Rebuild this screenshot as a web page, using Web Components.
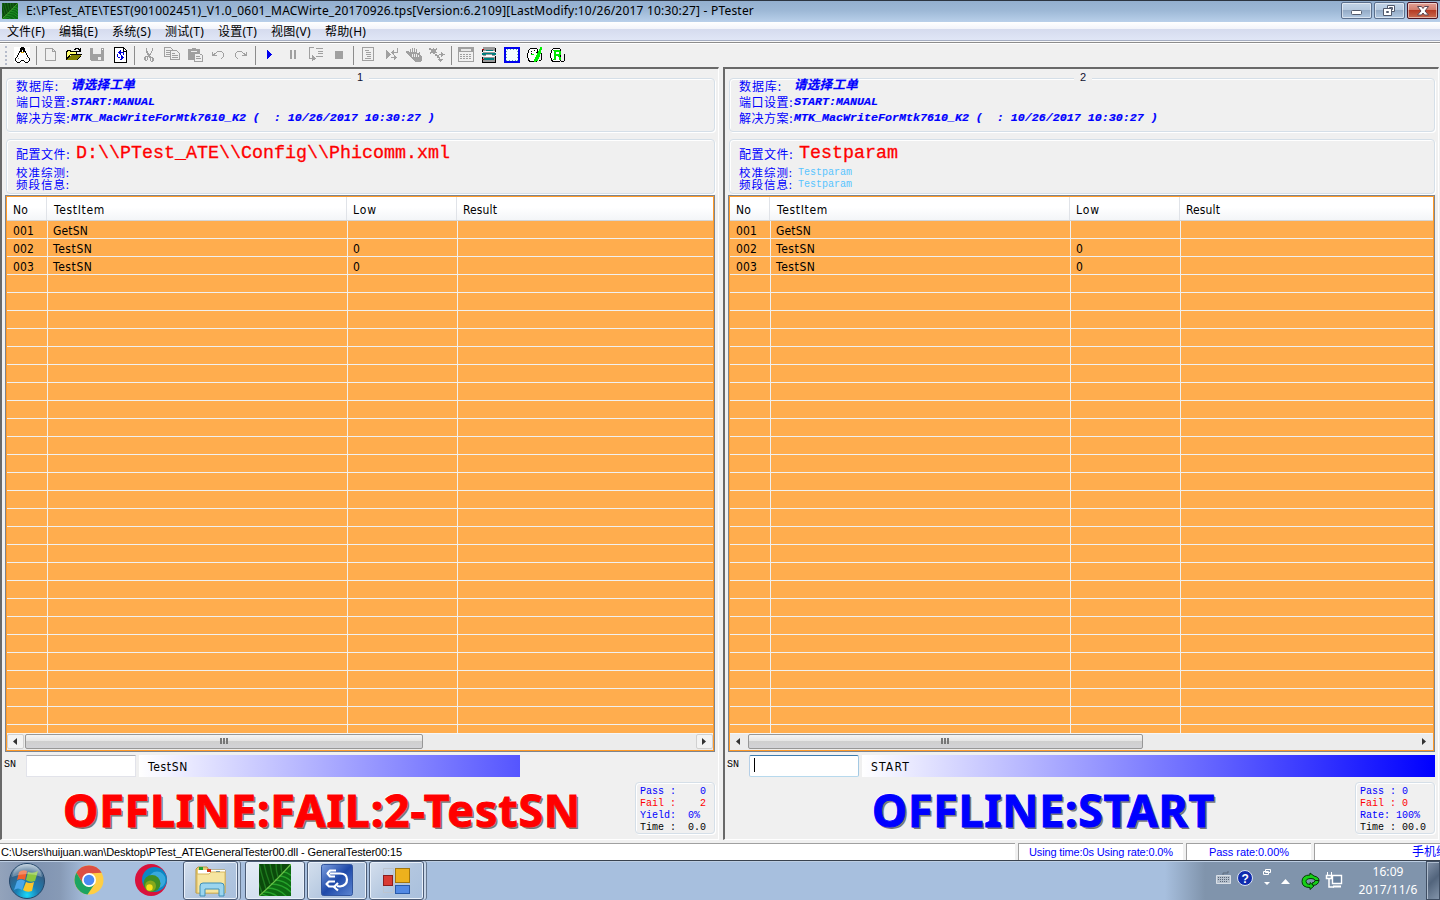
<!DOCTYPE html>
<html lang="zh-CN">
<head>
<meta charset="utf-8">
<title>PTester</title>
<style>
html,body{margin:0;padding:0;width:1440px;height:900px;overflow:hidden;background:#f0f0f0}
</style>
</head>
<body>
<pt-app></pt-app>
<script>
const define = (name, css, html, setup) => {
  customElements.define(name, class extends HTMLElement {
    connectedCallback() {
      if (this.shadowRoot) return;
      const root = this.attachShadow({mode: 'open'});
      root.innerHTML = `<style>*{box-sizing:border-box}${css}</style>${typeof html === 'function' ? html(this) : html}`;
      if (setup) setup(this, root);
    }
  });
};

/* Text that spreads its letter spacing to reach a given width. */
define('fit-text', ':host{display:inline-block;white-space:pre}span{display:inline-block;white-space:pre}',
  '<span><slot></slot></span>',
  (el, root) => {
    const s = root.querySelector('span'), w = +el.getAttribute('w');
    const nat = s.getBoundingClientRect().width;
    s.style.letterSpacing = ((w - nat) / el.textContent.length) + 'px';
  });

const G = '#a0a0a0';
const ICONS = {
  penguin: `<path d="M0 0h16v16H0z" fill="#fff"/><path d="M7 0h3v1h1v4H9V3H8v2H6V1h1zM5 4h1v2H5zM11 4h1v2h-1zM4 6h1v2H4zM12 6h1v2h-1zM3 8h1v2H3zM13 8h1v2h-1zM2 10h1v1H2zM14 10h1v1h-1zM1 11h1v3H1zM15 11h1v3h-1zM2 14h1v1H2zM14 14h1v1h-1zM3 15h3v1H3zM11 15h3v1h-3zM6 14h1v1H6zM10 14h1v1h-1zM7 13h3v1H7z" fill="#000"/><path d="M7 5h3v1H7z" fill="#e0a800"/><path d="M4 11h1v1H4zM12 11h1v1h-1z" fill="#888"/>`,
  file: `<path d="M2.500 1.500h7l3 3v9h-10zM9.500 1.500v3h3" fill="none" stroke="${G}"/>`,
  open: `<path d="M1 4h4v1h6v3H4l-3 5z" fill="#ffff70"/><path d="M.5 12.500v-8h1v-1h3v1h6v3M4.500 7.500h11l-4 5H.500z" stroke="#000" fill="none"/><path d="M5 8h10l-3.500 4.500H1.500z" fill="#808000"/><path d="M8 2.500h1v-1h3v1h1v1h1M14.500 1v4M11 4.500h4" stroke="#000" fill="none"/>`,
  save: `<path d="M1 1h14v13H2l-1-1z" fill="${G}"/><path d="M4 1h8v6H4zM9 10h3v3H9z" fill="#eee"/><path d="M13 2h1v1h-1z" fill="#fff"/>`,
  reload: `<path d="M2.500.500h9l3 3v12h-12z" fill="#fff" stroke="#000"/><path d="M11 0v4h4" fill="none" stroke="#000"/><path d="M8 3v1H7v1H6v1h1v1h1v1h1V6h1V5H9V3zM9 8v4h-1v1h2v-1h1v-1h1v-1h-1V9h-1V8zM10 5h2v3h-1V6h-1zM5 7h1v3h2v1H6v-1H5z" fill="#0000e0"/>`,
  cut: `<path d="M5 1h1v3h1v2h1v1h1V6h1V4h1V1h1v3h-1v2h-1v2H9v1h1v1h2v1h1v3h-1v1h-2v-1H9v-3H8v-1H7v3H6v1H4v-1H3v-3h1v-1h2V9h1V8H6V6H5zM5 10v3h1v-3zM10 11v3h1v-3z" fill="${G}" fill-rule="evenodd"/>`,
  copy: `<path d="M.5.500h6l2 2v7h-8z" fill="#f0f0f0" stroke="${G}"/><path d="M2 3.500h4M2 5.500h4M2 7.500h4" stroke="${G}"/><path d="M6.500 3.500h6l3 3v6h-9z" fill="#f0f0f0" stroke="${G}"/><path d="M8 6.500h3M8 8.500h6M8 10.500h6" stroke="${G}"/>`,
  paste: `<path d="M1 2h4V1h4v1h4v4H7v7H1z" fill="${G}"/><path d="M4 4.500h6" stroke="#eee"/><path d="M7.500 6.500h5l3 2v6h-8z" fill="#f0f0f0" stroke="${G}"/><path d="M9 9.500h4M9 11.500h5" stroke="${G}"/>`,
  undo: `<path d="M2 5h1v2h1V6h2V5h1V4h5v1h1v1h1v4h-1v1h-1v1h-1v-1h1v-1h1V6h-1V5H7v1H6v1H5v1h2v1H2z" fill="${G}"/>`,
  redo: `<path d="M14 5h-1v2h-1V6h-2V5H9V4H4v1H3v1H2v4h1v1h1v1h1v-1H4v-1H3V6h1V5h5v1h1v1h1v1H9v1h5z" fill="${G}"/>`,
  play: `<path d="M5 3h1v1h1v1h1v1h1v1h1v1H9v1H8v1H7v1H6v1H5z" fill="#0000f0"/>`,
  pause: `<path d="M5 3h2v9H5zM9 3h2v9H9z" fill="${G}"/>`,
  step: `<path d="M6 .500H1.500v11H5M8 1.500h7M10 4.500h5M10 6.500h5M8 9.500h7" fill="none" stroke="${G}"/><path d="M4 8l4 3.500-4 3z" fill="${G}"/>`,
  stop: `<path d="M4 4h8v8H4z" fill="${G}"/>`,
  list: `<path d="M2.500.500h11v13h-11zM5 3.500h4M6 5.500h5M6 7.500h5M7 9.500h4M5 11.500h6" fill="none" stroke="${G}"/>`,
  swap: `<path d="M3 3l5 4.500L3 12z" fill="${G}"/><path d="M10 3h1v2h3V1h1v5h-4v2h-1V7H9V6H8V5h1V4h1zM8 10h3V8h1v1h1v1h1v1h-1v1h-1v1h-1v-2H8z" fill="${G}"/>`,
  hand: `<path d="M0 4h2l2 2V2h1v3h1V1h1v4h1V1h1v4h1V2h1v4h1l1-1h1v3l2 2v3l-2 2H9l-3-3-2-3-3-2z" fill="${G}"/><path d="M6 7v3M8 7v3M10 7v3M12 8v2" stroke="#eee"/>`,
  merge: `<path d="M0 1h2v1h2V1h1v1h2V1h1v2H7v2h1v1H6v1H4V6H2v1H1V5h1V3H0z" fill="${G}"/><path d="M6 7h2v1h2v2h1v3h-1v-2H8V9H6z" fill="${G}"/><path d="M10 7h2V5h1v1h1v1h2v1h-2v1h-1v1h-1V8h-2zM9 12h5v1h-1v1h-1v1h-1v-1h-1v-1H9z" fill="${G}"/>`,
  calc: `<path d="M.5.500h15v14H.500z" fill="#f0f0f0" stroke="${G}"/><path d="M1 1h14v4H1z" fill="${G}"/><path d="M3 2h10v2H3z" fill="#e8e8e8"/><path d="M2 7.500h12M2 9.500h12M2 11.500h12" stroke="${G}" stroke-dasharray="2 1"/>`,
  server: `<path d="M2 0h12v4H2zM2 5h12v4H2zM2 10h12v5H2z" fill="#999"/><path d="M5 3h7v1H5zM1 6h4v2H1zM11 6h4v2h-4zM5 6h6v1H5zM3 11h10v2H3z" fill="#008080"/><path d="M4 4h9v1H4zM4 9h9v1H4zM5 8h6v1H5z" fill="#fff"/><path d="M1 2h1v3H1zM14 1h1v4h-1zM1 10h1v5H1zM14 9h1v6h-1zM1 15h14v1H1z" fill="#000"/><path d="M1 2h2v1H1zM1 12h2v1H1z" fill="#a00"/>`,
  frame: `<path d="M0 0h16v16H0z" fill="#0000f0"/><path d="M2 2h12v12H2z" fill="#f3ffff"/><path d="M2.500 2.500h11v11h-11z" fill="none" stroke="#60a8a8" stroke-dasharray="1 2"/>`,
  probe: `<path d="M3 1h7v1h1v12h-1v1H2v-1H1v-3H0V6h1V3h1V2h1z" fill="#000"/><path d="M3 2h7v12H3v-1H2v-2H1V6h1V3h1z" fill="#fff"/><path d="M4 4h1v1H4zM7 3h1v1H7zM9 5h1v1H9zM4 6h1v1H4z" fill="#000"/><path d="M13 0h2v3h-1v4h-1v3h-1v2h-1v2H9v1H7v-3h1v-2h1V8h1V6h1V4h1V2h1zM4 7h3v1H4z" fill="#00f000"/><path d="M14 6h1v7h-1v1h-2v-1h2z" fill="#000"/>`,
  rsign: `<path d="M3 1h7v1h1v12h-1v1H2v-1H1v-3H0V6h1V3h1V2h1z" fill="#000"/><path d="M3 2h7v12H3v-1H2v-2H1V6h1V3h1z" fill="#fff"/><path d="M3 3h7v1h1v4h-1v2h1v3H9v-3H8V9H6v4H3v-1h1V4H3zM6 5v2h3V5z" fill="#00e800" fill-rule="evenodd"/><path d="M14 7h1v7h-1v1h-3v-1h3z" fill="#000"/>`
};
define('pt-icon', ':host{display:block;width:16px;height:16px}svg{display:block}',
  el => `<svg width="16" height="16" viewBox="0 0 16 16" shape-rendering="crispEdges">${ICONS[el.getAttribute('name')]}</svg>`);

define('leaf-picture', ':host{display:block}svg{display:block;width:100%;height:100%}',
  `<svg viewBox="0 0 32 32" preserveAspectRatio="none"><path d="M0 0h32v32H0z" fill="#0b4a0b"/>
  <path d="M0 32Q14 18 32 0v32z" fill="#0d6a12"/>
  <g stroke="#1f7a1f" stroke-width="1.400" fill="none"><path d="M3 29Q0 20 -4 8M7 25Q3 12 0 0M11 20Q7 10 5 0M15 17Q12 8 11 0M19 13Q17 7 17 0M23 9q-1-4-1-9"/></g><g stroke="#27a32c" stroke-width="1.300" fill="none"><path d="M5 28q9 0 15 6M8 24q12 0 20 9M12 20q12 0 21 9M16 16q9 0 17 8M20 12q7 0 13 6M24 8q4 0 9 4M3 30l8 3"/></g>
  <path d="M0 32Q16 18 32 0" stroke="#6ac046" stroke-width="1.200" fill="none"/></svg>`);

define('title-bar', `:host{display:flex;height:22px;border-top:1px solid #2c3440;background:linear-gradient(#93afcf,#9db8d6 45%,#b9d0ea);align-items:center;font:12px "Noto Sans","Open Sans",sans-serif;color:#000}
leaf-picture{width:16px;height:16px;margin:0 8px 2px 2px}
.t{flex:1;line-height:20px;height:21px}
.b{display:flex;gap:2px;padding-right:2px;align-self:flex-start;margin-top:1px}
.b div{width:31px;height:17px;border:1px solid #5b6f8c;border-radius:2px;background:linear-gradient(#c2d4e8,#b4c8de 48%,#94abc6 50%,#b2c9e2);box-shadow:inset 0 0 0 1px #ffffff80}
.b .x{background:linear-gradient(#e2a196,#d17a6a 48%,#b53b24 50%,#c96b50);border-color:#4b1422}
svg{display:block;width:29px;height:15px}`,
`<leaf-picture></leaf-picture><div class="t"><fit-text w="728">E:\\PTest_ATE\\TEST(901002451)_V1.0_0601_MACWirte_20170926.tps[Version:6.2109][LastModify:10/26/2017 10:30:27] - PTester</fit-text></div>
<div class="b"><div><svg><rect x="9.500" y="7.500" width="10" height="4" rx="1" fill="#fff" stroke="#525a6c"/></svg></div>
<div><svg><path d="M12.500 2.500h7v6h-7z" fill="#fff" stroke="#525a6c"/><path d="M14.500 4.500h3v2h-3z" fill="#a9bdd5" stroke="#525a6c"/><path d="M8.500 5.500h8v7h-8z" fill="#fff" stroke="#525a6c"/><path d="M11.500 8.500h2v1h-2z" fill="#a9bdd5" stroke="#525a6c"/></svg></div>
<div class="x"><svg><path d="M9.500 3.500h4l1.500 2 1.500-2h4l-3.500 4.500 3.500 4h-4l-1.500-2-1.500 2h-4l3.500-4z" fill="#fff" stroke="#5a4450"/></svg></div></div>`);

define('menu-bar', `:host{display:flex;height:22px;padding:0 0 0 7px;background:linear-gradient(#fff 0,#f2f4fa 7px,#d5dbee 7px,#e0e6f6 18px,#a6aec2 18px,#a6aec2 19px,#fff 19px,#f0f0f0 20px,#8c8c8c 20px,#8c8c8c 21px,#fff 21px);font:12px/20px "Noto Sans","Noto Sans CJK SC",sans-serif;color:#000}
fit-text{margin-right:14px}`,
['文件(F)','编辑(E)','系统(S)','测试(T)','设置(T)','视图(V)','帮助(H)'].map((t,i)=>`<fit-text w="${[38,39,39,39,39,40,41][i]}">${t}</fit-text>`).join(''));

define('tool-bar', `:host{display:flex;height:23px;align-items:center;padding-left:5px;background:#f0f0f0}
.g{width:5px;height:19px;border-left:2px dotted #b6bccb}
.c{width:23px;padding-left:4px;margin-top:-2px}
.s{width:6px;height:19px;padding-left:3px;margin-top:-1px}.s i{display:block;width:1px;height:19px;background:#8c8c8c}`,
'<div class="g"></div>' + 'penguin|file open save reload|cut copy paste undo redo|play pause step stop|list swap hand merge|calc server frame probe rsign'
  .split('|').map(g => g.split(' ').map(n => `<div class="c"><pt-icon name="${n}"></pt-icon></div>`).join('')).join('<div class="s"><i></i></div>'));

define('group-box', ':host{display:block;position:relative;border:1px solid #d5dfe8;border-radius:4px;box-shadow:inset 1px 1px #fff,1px 1px #fff}.l{position:absolute;left:344px;top:-9px;width:18px;height:11px;overflow:hidden;background:#f0f0f0;text-align:center;font:11px/15px "Liberation Sans",sans-serif;color:#101030}.l:empty{display:none}',
  el => `<div class="l">${el.getAttribute('legend') || ''}</div><slot></slot>`);

define('test-grid', `:host{display:flex;flex-direction:column;height:557px;border:1px solid #7f858d;background:#ffad4e;padding:1px 0 1px 1px;box-shadow:inset 1px 1px #ff9a28,inset -1px -1px #ff9a28;font:12px "DejaVu Sans Condensed","DejaVu Sans",sans-serif;font-stretch:condensed;color:#000}
.r{display:grid;grid-template-columns:40px 300px 110px 1fr;height:18px;line-height:21px;flex:none;margin-right:1px;border-bottom:1px solid #f0f0f0}
.r>div{padding-left:5px;border-left:1px solid #f0f0f0;white-space:pre;height:17px}
.r>div:first-child{border:0;padding-left:6px}
.r.h{height:24px;line-height:27px;background:linear-gradient(#fff 45%,#f3f5f8);border-bottom:1px solid #d5d5d5}
.r.h>div{border-color:#e0e3e8;padding-left:6px;margin-left:-1px;height:23px}.r.h>div:first-child{margin-left:0}
.r.h>div:nth-child(2){padding-left:7px}
.rows{flex:1;overflow:hidden;min-height:0}
.sb{display:flex;height:17px;background:#ececec;margin-right:1px;border-top:1px solid #f6f6f6}
.a{width:17px;height:15px;display:flex;align-items:center;justify-content:center}
.th{height:15px;margin-left:1px;border:1px solid #979797;border-radius:2px;background:linear-gradient(#f4f4f4,#e4e4e4 48%,#cfcfcf 50%,#d2d2d6);display:flex;align-items:center;justify-content:center}
.sp{flex:1}.bd{border:1px solid #d0d0d0;border-radius:2px;background:#f3f3f3}`,
el => {
  const row = (a, c='') => `<div class="r ${c}">${a.map(x => `<div>${x ? `<fit-text w="${x[1]}">${x[0]}</fit-text>` : ''}</div>`).join('')}</div>`;
  const data = [[['001',21],['GetSN',35],0,0],[['002',21],['TestSN',39.500],['0',7],0],[['003',21],['TestSN',39.500],['0',7],0]];
  while (data.length < 29) data.push([0,0,0,0]);
  const bd = el.hasAttribute('hot') ? '' : 'bd';
  return row([['No',15],['TestItem',51],['Low',24],['Result',34]],'h') + `<div class="rows">${data.map(d => row(d)).join('')}</div>
  <div class="sb"><div class="a ${bd}"><svg width="5" height="7"><path d="M4 0v7L0 3.500z" fill="#333"/></svg></div><div class="th" style="width:${el.getAttribute('thumb')}px"><svg width="9" height="7" shape-rendering="crispEdges"><path d="M0 0h2v6H0zM3 0h2v6H3zM6 0h2v6H6z" fill="#777"/></svg></div><div class="sp"></div><div class="a ${bd}"><svg width="5" height="7"><path d="M0 0v7l4-3.500z" fill="#333"/></svg></div></div>`;
});

define('test-panel', `:host{display:flex;flex-direction:column;height:773px;padding:10px 3px 0 4px;border-left:2px solid #696969;border-top:2px solid #696969;border-right:1px solid #fff;border-bottom:1px solid #fff;background:#f0f0f0;font-family:"Liberation Mono","Noto Sans CJK SC",monospace;color:#00f}
.g1{height:54px;margin-top:-1px}.g2{height:55px;margin-top:7px;padding-top:1px}
.l{display:flex;height:16px;line-height:14px;padding-left:9px;white-space:pre}
.l>span{width:55px;font:12px/13px "Noto Sans CJK SC",sans-serif}
.l b{font-style:italic;font-size:11.670px;-webkit-text-stroke:.2px #00f}
.l.z{height:12px;line-height:12px}.l.z>span{line-height:10px;font-size:11.500px}
.l.f{height:26px;line-height:25px}.l.f>span{line-height:25px}
.red{color:#f00;font:18.330px/26px "Liberation Mono",monospace;margin-left:5px;-webkit-text-stroke:.3px #f00}
.cy{font-size:10px;color:#58c4ff;margin-left:4px}
test-grid{margin:1px 0 0 -1px}
.sn{display:flex;height:22px;margin-top:3px;margin-left:-2px}
.sn>em{font:10px/19px "Liberation Mono",monospace;color:#000;width:22px}
.in{width:110px;background:#fff;border:1px solid #e2e3ea;border-top-color:#abadb3;padding:2px 4px}
.in.on{border-color:#3d7bad #a4c9e3 #b7d9ed #b5cfe7;border-radius:2px}
.in i{display:block;width:1px;height:14px;background:#000}
.bar{margin-left:3px;color:#000;font:12px/25px "DejaVu Sans Condensed",sans-serif;padding-left:9px}
.bt{display:flex;position:relative;height:59px}
.big{flex:1;font:bold 44.500px/60px "Noto Sans","DejaVu Sans Condensed",sans-serif;-webkit-text-stroke:1px currentColor;text-shadow:-1px -1px #fff,1px 1px #888,2px 2px #777;white-space:pre;padding-top:3px}
.st{width:80px;height:52px;margin-top:5px;padding:2px 0 0 4px;font:10px/13px "Liberation Mono",monospace;white-space:pre}
.st div{height:12px}`,
el => {
  const two = el.getAttribute('no') === '2';
  const cy = two ? '<div class="cy">Testparam</div>' : '';
  const st = two ? ['Pass : 0','Fail : 0','Rate: 100%','Time : 00.0'] : ['Pass :    0','Fail :    2','Yield:  0%','Time :  0.0'];
  return `<group-box class="g1" legend="${el.getAttribute('no')}">
  <div class="l"><span><fit-text w="43">数据库:</fit-text></span><b style="font-size:12.500px"><fit-text w="64">请选择工单</fit-text></b></div>
  <div class="l"><span><fit-text w="54">端口设置:</fit-text></span><b>START:MANUAL</b></div>
  <div class="l"><span><fit-text w="54">解决方案:</fit-text></span><b>MTK_MacWriteForMtk7610_K2 (  : 10/26/2017 10:30:27 )</b></div></group-box>
  <group-box class="g2"><div class="l f"><span><fit-text w="54">配置文件:</fit-text></span><div class="red">${el.getAttribute('config')}</div></div>
  <div class="l z"><span><fit-text w="54">校准综测:</fit-text></span>${cy}</div><div class="l z"><span><fit-text w="54">频段信息:</fit-text></span>${cy}</div></group-box>
  <test-grid thumb="${two ? 395 : 398}" ${two ? 'hot' : ''}></test-grid>
  <div class="sn"><em style="font-style:normal">SN</em><div class="in ${two ? 'on' : ''}">${two ? '<i></i>' : ''}</div>
  <div class="bar" style="width:${two ? 573 : 381}px;background:linear-gradient(90deg,#fff,${two ? '#00f' : '#5555ff'})"><fit-text w="${two ? 39 : 40}">${two ? 'START' : 'TestSN'}</fit-text></div></div>
  <div class="bt"><div class="big" style="color:${two ? '#00f' : '#f00'};padding-left:${two ? 143 : 57}px"><fit-text w="${two ? 343 : 518}"><slot></slot></fit-text></div>
  <group-box class="st">${st.map((t,i) => `<div style="color:${['#00f','#f00','#00f','#000'][i]}">${t}</div>`).join('')}</group-box></div>`;
}, (el, root) => {
  const s = root.querySelector('.big fit-text'), span = s.shadowRoot.querySelector('span');
  span.style.letterSpacing = '0px';
  const w = span.getBoundingClientRect().width;
  span.style.letterSpacing = ((+s.getAttribute('w') - w) / el.textContent.length) + 'px';
});

define('status-bar', `:host{display:flex;gap:3px;height:17px;font:11px/16px "Liberation Sans","Noto Sans CJK SC",sans-serif;color:#00f;background:#f0f0f0}
div{background:#fff;border-top:1px solid #a0a0a0;border-left:1px solid #a0a0a0;white-space:nowrap;overflow:hidden}`,
`<div style="width:1015px;color:#000;border-left:0;padding-left:1px"><fit-text w="401">C:\\Users\\huijuan.wan\\Desktop\\PTest_ATE\\GeneralTester00.dll - GeneralTester00:15</fit-text></div>
<div style="width:165px;padding-left:10px"><fit-text w="144">Using time:0s Using rate:0.0%</fit-text></div>
<div style="width:125px;padding-left:22px"><fit-text w="80">Pass rate:0.00%</fit-text></div>
<div style="width:126px;padding-left:97px;font-size:12px;line-height:16px">手机综测</div>`);

define('task-bar', `:host{display:flex;height:40px;border-top:1px solid #39424f;box-shadow:inset 0 1px #bccde2;background:linear-gradient(90deg,#93a3bb 0,#7f93b1 35px,#879ab6 60px,#a7bfde 88px,#a7bfde 1165px,#8094ac 1205px,#8094ac);align-items:center;font:12px/18px "Noto Sans",sans-serif;color:#fff}
svg{display:block}
.o{width:55px;padding-left:8px}.q{width:62px;padding-left:18px;margin-top:-2px}
.b{height:39px;border:1px solid #4b5c76;border-radius:3px;box-shadow:inset 0 0 0 1px #e8f0fa;background:linear-gradient(135deg,#d4dfed,#b2c6df 55%,#a9c0dd);display:flex;align-items:center;justify-content:center;margin-right:2px;flex:none}
.b.on{background:linear-gradient(#e4ecf6,#d4e0ef)}
.k{margin-right:4px;box-shadow:inset 0 0 0 1px #e8f0fa,2px 0 #c6d5e8,3px 0 #65778f}
leaf-picture{width:32px;height:32px;margin-top:-1px}
.sp{flex:1}.tray{display:flex;align-items:center}
.ck{width:60px;text-align:center;margin:0 8px 0 14px}.ck div{height:18px;white-space:nowrap}
.d{width:14px;height:39px;border:1px solid #3f4e63;box-shadow:inset 1px 1px #aebccd;background:linear-gradient(135deg,#8494aa,#52647c 50%,#8394aa)}`,
`<div class="o"><svg width="38" height="38"><defs><radialGradient id="o" cx=".5" cy=".9" r=".9"><stop offset="0" stop-color="#1bd8f8"/><stop offset=".35" stop-color="#1a7fb4"/><stop offset=".75" stop-color="#335f86"/><stop offset="1" stop-color="#b9ccdb"/></radialGradient></defs><circle cx="19" cy="19" r="17.500" fill="url(#o)" stroke="#24476b"/><path d="M11 10q4-3 8-1l-2 9q-4-2-8 0z" fill="#f0602c"/><path d="M20 10q5 2 10-1l-3 10q-5 2-9-1z" fill="#8cc63e"/><path d="M9 19q4-3 8 0l-3 9q-4-3-8 0z" fill="#4aa6ea"/><path d="M18 20q4 2 8 0l-2 9q-5 2-9-1z" fill="#fcc52a"/><path d="M4 15Q7 2 19 2t15 13Q19 9 4 15z" fill="#fff" opacity=".28"/></svg></div>
<div class="q"><svg width="32" height="32"><circle cx="16" cy="16" r="14.500" fill="#ffce44"/><path d="M3.400 8.800A14.500 14.500 0 0 1 28.600 8.800L16 9.500l-6 10z" fill="#dd4f42"/><path d="M3.400 8.800A14.500 14.500 0 0 0 14.500 30.400L22 19.500 16 23 10 19.500z" fill="#1da462"/><circle cx="16" cy="16" r="7" fill="#fff"/><circle cx="16" cy="16" r="5.300" fill="#4a8af4"/></svg></div>
<div class="q" style="width:66px"><svg width="32" height="32"><circle cx="16" cy="16" r="16" fill="#d8123c"/><circle cx="19.500" cy="15.500" r="12.500" fill="#0c87c4"/><circle cx="22" cy="16" r="8.500" fill="#38a9dc"/><circle cx="17" cy="19.500" r="8.500" fill="#3f8e25"/><circle cx="15.500" cy="22" r="5.500" fill="#86a81b"/><circle cx="14.500" cy="23.500" r="3.200" fill="#f7e21b"/></svg></div>
<div class="b k" style="width:55px"><svg width="34" height="34"><path d="M2 5l2-2h9l2 3h16v23H2z" fill="#e9cf76" stroke="#b7943f"/><path d="M4 6h27v5H4z" fill="#fff"/><path d="M5 3h4v3H5z" fill="#20a030"/><path d="M13 5h4v3h-4z" fill="#d8371c"/><path d="M22 7h4v3h-4z" fill="#2b7bd0"/><path d="M3 10h12l2-2h14v21H3z" fill="#f6e5a0" stroke="#d7b860"/><path d="M6 32V22q0-3 3-3h18q3 0 3 3v10h-5v-7H11v7z" fill="#9bd5ef" stroke="#3e8fb7"/></svg></div>
<div class="b on" style="width:60px;margin-left:3px"><leaf-picture></leaf-picture></div>
<div class="b" style="width:60px"><svg width="33" height="33"><defs><linearGradient id="b" x2="1" y2="1"><stop stop-color="#7ea0df"/><stop offset=".5" stop-color="#1e49a9"/><stop offset="1" stop-color="#5d86d2"/></linearGradient></defs><rect x=".500" y=".500" width="31" height="31" rx="2" fill="url(#b)" stroke="#31549d"/><path d="M15 6.500H9L6.500 9.500 9 12.500h5M9 9.500h10q7 0 7 6t-7 7l-3-.500M14 17.500H8L5.500 20l2.500 2.500h6M17 19l-4 4 4 3.500" fill="none" stroke="#fff" stroke-width="2.200" stroke-linejoin="round"/></svg></div>
<div class="b k" style="width:55px"><svg width="30" height="30"><path d="M1.500 2.500h10v24h-10zM1 10h11M1 19h27" fill="none" stroke="#bcc4cf"/><rect x="1.500" y="9.500" width="9" height="10" fill="#d93a32" stroke="#8c1d1d"/><rect x="13.500" y="2.500" width="14" height="14" fill="#edb11d" stroke="#a3760c"/><rect x="13.500" y="19.500" width="14" height="8" fill="#5289e4" stroke="#2859a8"/></svg></div>
<div class="sp"></div>
<div class="tray"><svg width="129" height="38" style="margin-right:1px"><path d="M2.500 13.500h14v8h-14z" fill="#b4bfcc" stroke="#d9dfe6"/><path d="M4 15.500h11M4 17.500h11M6 19.500h7" stroke="#5a6677" stroke-dasharray="1 1"/><path d="M9 13v-2h5v-2" fill="none" stroke="#5c6a7d"/><circle cx="31" cy="16" r="7.500" fill="#102cae" stroke="#dbe4f2"/><text x="27.500" y="20.500" font-family="Liberation Sans" font-size="12" font-weight="bold" fill="#fff">?</text><path d="M51.500 7.500h5v3h-5zM49.500 9.500h5v3h-5z" fill="#8094ac" stroke="#fff"/><path d="M50 20h6l-3 3zM67 22l4.500-5 4.500 5z" fill="#fff"/><path d="M88 19.500q0-6.500 8-6.500v-2l4 3q5 1 5 4.500h-4q0-2-4-2-5 0-5 3t4 3v-2l4 3.500-4 3.500v-2q-8 0-8-6zM99 23.500q5.500-.500 6-5h-4q0 2-3 2.500z" fill="#16d016" stroke="#033d03"/><path d="M113.500 10v4M117.500 10v4" stroke="#fff"/><path d="M112.500 13.500h5v3h-5zM115 17v8h5" fill="none" stroke="#fff" stroke-width="1.500"/><path d="M118.500 13.500h9v8h-9z" fill="#68809d" stroke="#fff" stroke-width="1.400"/><path d="M119 24.500h8" stroke="#fff" stroke-width="2"/></svg>
<div class="ck"><div><fit-text w="31">16:09</fit-text></div><div><fit-text w="59">2017/11/6</fit-text></div></div><div class="d"></div></div>`);

define('pt-app', `:host{display:flex;flex-direction:column;width:1440px;height:900px;background:#f0f0f0}
.w{display:flex;gap:4px;height:773px;margin-bottom:3px}`,
`<title-bar></title-bar><menu-bar></menu-bar><tool-bar></tool-bar>
<div class="w"><test-panel no="1" style="width:719px;box-sizing:border-box" config="D:\\\\PTest_ATE\\\\Config\\\\Phicomm.xml">OFFLINE:FAIL:2-TestSN</test-panel>
<test-panel no="2" style="width:716px;box-sizing:border-box" config="Testparam">OFFLINE:START</test-panel></div>
<status-bar></status-bar><task-bar></task-bar>`);
</script>
</body>
</html>
